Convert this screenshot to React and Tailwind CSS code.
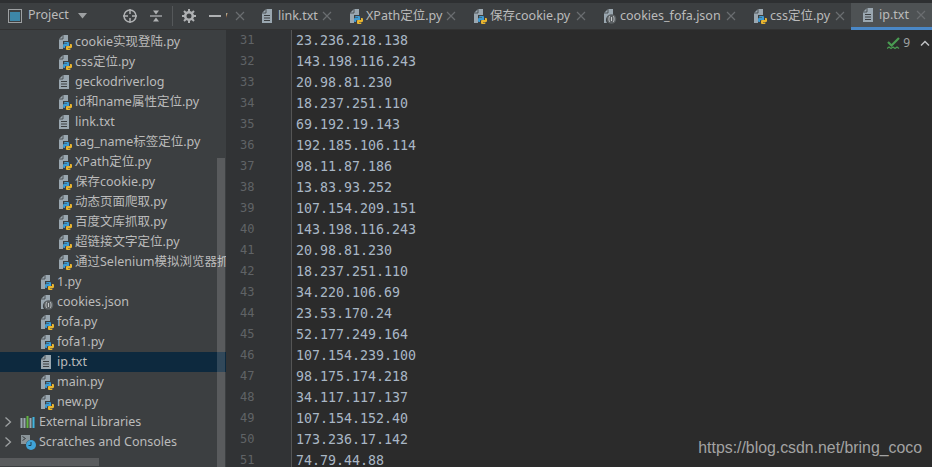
const uiFont = "font-['Segoe_UI','Noto_Sans','Noto_Sans_CJK_SC',sans-serif]";

const tree = [
  { name: "cookie实现登陆.py", type: "py", indent: "pl-[58px]" },
  { name: "css定位.py", type: "py", indent: "pl-[58px]" },
  { name: "geckodriver.log", type: "txt", indent: "pl-[58px]" },
  { name: "id和name属性定位.py", type: "py", indent: "pl-[58px]" },
  { name: "link.txt", type: "txt", indent: "pl-[58px]" },
  { name: "tag_name标签定位.py", type: "py", indent: "pl-[58px]" },
  { name: "XPath定位.py", type: "py", indent: "pl-[58px]" },
  { name: "保存cookie.py", type: "py", indent: "pl-[58px]" },
  { name: "动态页面爬取.py", type: "py", indent: "pl-[58px]" },
  { name: "百度文库抓取.py", type: "py", indent: "pl-[58px]" },
  { name: "超链接文字定位.py", type: "py", indent: "pl-[58px]" },
  { name: "通过Selenium模拟浏览器抓取.py", type: "py", indent: "pl-[58px]" },
  { name: "1.py", type: "py", indent: "pl-[40px]" },
  { name: "cookies.json", type: "json", indent: "pl-[40px]" },
  { name: "fofa.py", type: "py", indent: "pl-[40px]" },
  { name: "fofa1.py", type: "py", indent: "pl-[40px]" },
  { name: "ip.txt", type: "txt", indent: "pl-[40px]", selected: true },
  { name: "main.py", type: "py", indent: "pl-[40px]" },
  { name: "new.py", type: "py", indent: "pl-[40px]" },
];

const tabs = [
  { name: "link.txt", type: "txt", width: "w-[88px]" },
  { name: "XPath定位.py", type: "py", width: "w-[124px]" },
  { name: "保存cookie.py", type: "py", width: "w-[130px]" },
  { name: "cookies_fofa.json", type: "json", width: "w-[150px]" },
  { name: "css定位.py", type: "py", width: "w-[109px]" },
  { name: "ip.txt", type: "txt", width: "w-[81px]", active: true },
];

const ips = [
  "23.236.218.138", "143.198.116.243", "20.98.81.230", "18.237.251.110", "69.192.19.143",
  "192.185.106.114", "98.11.87.186", "13.83.93.252", "107.154.209.151", "143.198.116.243",
  "20.98.81.230", "18.237.251.110", "34.220.106.69", "23.53.170.24", "52.177.249.164",
  "107.154.239.100", "98.175.174.218", "34.117.117.137", "107.154.152.40", "173.236.17.142",
  "74.79.44.88",
];

const FileIcon = ({ type }) => (
  <svg width="16" height="16" viewBox="0 0 16 16" className="shrink-0">
    {type === "txt" && (
      <>
        <path d="M5 1h6v14H1V5z" fill="#9aa7b0" />
        <path d="M5 1v4H1" stroke="#3c3f41" strokeWidth="0.800" fill="none" />
        <path d="M3 7.500h6M3 10h6M3 12.500h6" stroke="#3c3f41" strokeWidth="1" />
      </>
    )}
    {type === "py" && (
      <>
        <path d="M5 1h5v6H5v8H1V5z" fill="#9aa7b0" />
        <path d="M5 1v4H1" stroke="#3c3f41" strokeWidth="0.800" fill="none" />
        <path d="M7 8h3a1 1 0 0 1 1 1v3H8a1 1 0 0 0-1 1v1H6a1 1 0 0 1-1-1v-2a1 1 0 0 1 1-1h3v-.5H6V9a1 1 0 0 1 1-1z" fill="#3d9ad1" />
        <path d="M12 10h1a1 1 0 0 1 1 1v2a1 1 0 0 1-1 1h-3v.5h2.500v.5a1 1 0 0 1-1 1H9a1 1 0 0 1-1-1v-2a1 1 0 0 1 1-1h3z" fill="#e8b52f" />
      </>
    )}
    {type === "json" && (
      <>
        <path d="M5 1h5v6H7a5 5 0 0 0-3 8H1V5z" fill="#9aa7b0" />
        <path d="M5 1v4H1" stroke="#3c3f41" strokeWidth="0.800" fill="none" />
        <circle cx="8.500" cy="11" r="4.800" fill="#5b6063" />
        <path d="M7 8c-1.200 0-.6 3-1.500 3 .9 0 .3 3 1.500 3M10 8c1.200 0 .6 3 1.500 3-.9 0-.3 3-1.500 3M8.500 9v4" stroke="#c4c7c9" fill="none" strokeWidth="1" />
      </>
    )}
  </svg>
);

const CloseIcon = () => (
  <svg width="10" height="10" viewBox="0 0 10 10" className="shrink-0">
    <path d="M1 1l8 8M9 1l-8 8" stroke="#6a6d70" strokeWidth="1.200" />
  </svg>
);

const Chevron = () => (
  <svg width="8" height="12" viewBox="0 0 8 12" className="shrink-0">
    <path d="M1.500 1.500L6.500 6l-5 4.500" stroke="#9da0a2" strokeWidth="1.300" fill="none" />
  </svg>
);

const SidebarHeader = () => (
  <div className="h-[27px] flex items-center border-b border-[#323232] pl-[8px] pb-[1px] relative">
    <svg width="14" height="14" viewBox="0 0 14 14" className="shrink-0">
      <rect x="0.500" y="0.500" width="13" height="13" fill="#3c3f41" stroke="#9da0a2" />
      <rect x="2" y="3" width="10" height="9" fill="#3d87a8" />
    </svg>
    <span className="ml-[6px] text-[12.500px] text-[#bbbbbb]">Project</span>
    <svg width="9" height="6" viewBox="0 0 9 6" className="ml-[9px] shrink-0">
      <path d="M0 0h9L4.500 5.500z" fill="#9da0a2" />
    </svg>
    <svg width="16" height="16" viewBox="0 0 16 16" className="ml-[35px] shrink-0">
      <circle cx="8" cy="8" r="6" fill="none" stroke="#afb1b3" strokeWidth="1.500" />
      <path d="M8 1v5M8 10v5M1 8h5M10 8h5" stroke="#afb1b3" strokeWidth="1.500" />
    </svg>
    <svg width="14" height="14" viewBox="0 0 14 14" className="ml-[11px] shrink-0">
      <path d="M1 7h12" stroke="#afb1b3" strokeWidth="1.300" />
      <path d="M7 5.500L4 1.500h6zM7 8.500L4 12.500h6z" fill="#afb1b3" />
    </svg>
    <div className="ml-[9px] w-[1px] h-[20px] bg-[#55585a]" />
    <svg width="14" height="14" viewBox="0 0 14 14" className="ml-[9px] shrink-0">
      <circle cx="7" cy="7" r="3.800" fill="none" stroke="#afb1b3" strokeWidth="2.600" />
      <path d="M7 0v3M7 11v3M0 7h3M11 7h3M2 2l2 2M10 10l2 2M12 2l-2 2M4 10l-2 2" stroke="#afb1b3" strokeWidth="2" />
    </svg>
    <div className="ml-[13px] w-[12px] h-[2px] bg-[#afb1b3]" />
  </div>
);

const Row = ({ item }) => (
  <div className={`h-[20px] flex items-center gap-[1px] whitespace-nowrap ${item.indent} ${item.selected ? "bg-[#0d293e]" : ""}`}>
    <FileIcon type={item.type} />
    <span className="text-[12.500px] text-[#bbbbbb]">{item.name}</span>
  </div>
);

const Sidebar = () => (
  <div className="w-[226px] shrink-0 bg-[#3c3f41] flex flex-col relative overflow-hidden">
    <SidebarHeader />
    <div className="pt-[2px]">
      {tree.map((item) => <Row key={item.name} item={item} />)}
      <div className="h-[20px] flex items-center pl-[4px] whitespace-nowrap">
        <Chevron />
        <svg width="16" height="14" viewBox="0 0 16 14" className="ml-[8px] shrink-0">
          <path d="M1.500 3v10M4.500 3v10" stroke="#9aa7b0" strokeWidth="2" />
          <path d="M7.500 1v12" stroke="#62b543" strokeWidth="2" />
          <path d="M10.500 3v10" stroke="#9aa7b0" strokeWidth="2" />
          <path d="M13.500 2v11" stroke="#40b6e0" strokeWidth="2" />
        </svg>
        <span className="ml-[3px] text-[12.500px] text-[#bbbbbb]">External Libraries</span>
      </div>
      <div className="h-[20px] flex items-center pl-[4px] whitespace-nowrap">
        <Chevron />
        <svg width="16" height="16" viewBox="0 0 16 16" className="ml-[8px] shrink-0">
          <path d="M1 1h9v5a5 5 0 0 0-4 4H1z" fill="#8a9499" />
          <path d="M2.500 2.500l3 2-3 2" stroke="#3c3f41" fill="none" />
          <circle cx="11" cy="11" r="5" fill="#3fa3d8" />
          <path d="M11 8v3.500H8.500" stroke="#1d3f52" fill="none" />
        </svg>
        <span className="ml-[3px] text-[12.500px] text-[#bbbbbb]">Scratches and Consoles</span>
      </div>
    </div>
    {/* scrollbars sit over the tree, see-through like in the IDE */}
    <div className="absolute right-[1px] top-[155px] bottom-0 w-[8px] bg-white/15" />
    <div className="absolute left-0 bottom-[1px] w-[99px] h-[8px] bg-white/15" />
  </div>
);

const TabBar = () => (
  <div className="h-[27px] flex bg-[#3c3f41] border-b border-[#323232]">
    <div className="w-[24px] shrink-0 flex items-center pr-[5px] overflow-hidden">
      <span className="-ml-[5px] text-[12.500px] text-[#bbbbbb]">y</span>
      <span className="ml-auto"><CloseIcon /></span>
    </div>
    {tabs.map((tab) => (
      <div
        key={tab.name}
        className={`${tab.width} shrink-0 flex items-center pl-[11px] pr-[6px] whitespace-nowrap ${tab.active ? "bg-[#4e5254] border-b-[3px] border-[#4a88c7] h-[27px]" : ""}`}
      >
        <FileIcon type={tab.type} />
        <span className="ml-[1px] text-[12.500px] text-[#bbbbbb]">{tab.name}</span>
        <span className="ml-auto"><CloseIcon /></span>
      </div>
    ))}
  </div>
);

const Editor = () => (
  <div className="flex-1 flex relative overflow-hidden bg-[#2b2b2b] font-['DejaVu_Sans_Mono',monospace]">
    <div className="w-[66px] shrink-0 bg-[#313335] border-r border-[#555555] pl-[14px] text-[#606366] text-[12px]">
      {ips.map((_, i) => (
        <div key={i} className="h-[21px] leading-[21px]">{31 + i}</div>
      ))}
    </div>
    <div className="pl-[4px] text-[#a9b7c6] text-[13.300px]">
      {ips.map((ip, i) => (
        <div key={i} className="h-[21px] leading-[21px]">{ip}</div>
      ))}
    </div>
    <div className="absolute top-[4px] right-[2px] flex items-center">
      <svg width="14" height="14" viewBox="0 0 14 14">
        <path d="M1 6l3.500 3.500L12 2" stroke="#4a9c52" strokeWidth="2.200" fill="none" />
        <path d="M0 12.500l2-1.500 2 1.500 2-1.500 2 1.500 2-1.500 2 1.500" stroke="#4a9c52" strokeWidth="1.200" fill="none" />
      </svg>
      <span className={`ml-[2px] text-[12px] text-[#a0a3a5] ${uiFont}`}>9</span>
      <svg width="10" height="7" viewBox="0 0 10 7" className="ml-[10px]">
        <path d="M1 5.500L5 1.500l4 4" stroke="#c0c2c4" strokeWidth="1.500" fill="none" />
      </svg>
    </div>
    <span className="absolute right-[10px] bottom-[7px] text-[15.850px] text-[#a3a3a3] font-['Liberation_Sans',sans-serif]">https://blog.csdn.net/bring_coco</span>
  </div>
);

const App = () => (
  <div className={`w-[932px] h-[467px] overflow-hidden flex flex-col bg-[#2b2b2b] ${uiFont}`}>
    <div className="h-[3px] shrink-0 bg-[#2e3032]" />
    <div className="flex-1 flex min-h-0">
      <Sidebar />
      <div className="flex-1 min-w-0 flex flex-col">
        <TabBar />
        <Editor />
      </div>
    </div>
  </div>
);

export default App;
